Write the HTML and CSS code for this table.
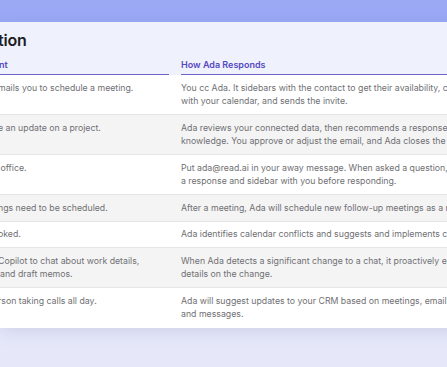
FILE: index.html
```html
<!DOCTYPE html>
<html lang="en">
<head>
<meta charset="utf-8">
<title>Ada in Action</title>
<link rel="stylesheet" href="styles.css">
</head>
<body>
  <div class="band"></div>
  <section class="card">
    <div class="card-head">
      <h2 class="title">tion</h2>
      <div class="grid head-row">
        <div class="th th-left">nt</div>
        <div class="th">How Ada Responds</div>
      </div>
    </div>
    <div class="grid row">
      <div class="td td-left">mails you to schedule a meeting.</div>
      <div class="td">You cc Ada. It sidebars with the contact to get their availability, checks it<br>with your calendar, and sends the invite.</div>
    </div>
    <div class="grid row alt">
      <div class="td td-left">e an update on a project.</div>
      <div class="td">Ada reviews your connected data, then recommends a response based on your<br>knowledge. You approve or adjust the email, and Ada closes the loop.</div>
    </div>
    <div class="grid row">
      <div class="td td-left">&nbsp;office.</div>
      <div class="td">Put ada@read.ai in your away message. When asked a question, Ada drafts<br>a response and sidebar with you before responding.</div>
    </div>
    <div class="grid row alt">
      <div class="td td-left">ngs need to be scheduled.</div>
      <div class="td">After a meeting, Ada will schedule new follow-up meetings as a next step.</div>
    </div>
    <div class="grid row">
      <div class="td td-left">oked.</div>
      <div class="td">Ada identifies calendar conflicts and suggests and implements changes.</div>
    </div>
    <div class="grid row alt">
      <div class="td td-left">Copilot to chat about work details,<br>and draft memos.</div>
      <div class="td">When Ada detects a significant change to a chat, it proactively emails you<br>details on the change.</div>
    </div>
    <div class="grid row last">
      <div class="td td-left">rson taking calls all day.</div>
      <div class="td">Ada will suggest updates to your CRM based on meetings, emails,<br>and messages.</div>
    </div>
  </section>
</body>
</html>
```

FILE: styles.css
```css
html, body {
  margin: 0;
  padding: 0;
}

body {
  width: 447px;
  height: 367px;
  overflow: hidden;
  background: linear-gradient(180deg, #eceefb 0%, #e6e8fa 100%);
  font-family: Inter, "Noto Sans", sans-serif;
}

.band {
  height: 22px;
  background: #9ba9f5;
}

.card {
  width: 660px;
  background: #ffffff;
  box-shadow: 0 5px 16px rgba(70, 70, 120, 0.13);
}

.card-head {
  background: #eff1fd;
  padding-top: 8px;
}

.title {
  margin: 0 0 9px -2px;
  font-size: 16px;
  line-height: 20px;
  font-weight: 600;
  letter-spacing: -0.01em;
  color: #1d1d22;
}

.grid {
  display: grid;
  grid-template-columns: 169px 470px;
  column-gap: 12px;
}

.th {
  font-size: 9px;
  line-height: 12px;
  font-weight: 600;
  color: #5548c2;
  padding-bottom: 3px;
  border-bottom: 1px solid #6c63c6;
}

.th-left {
  margin-left: -1px;
}

.row {
  background: #ffffff;
  border-bottom: 1px solid #e6e6e9;
}

.row.alt {
  background: #f4f4f5;
}

.row.last {
  border-bottom: none;
  padding-bottom: 1px;
}

.td {
  padding: 6.5px 0 5.5px;
  font-size: 8.75px;
  line-height: 13.5px;
  color: #707073;
  white-space: nowrap;
}

.td-left {
  text-indent: -2px;
}
```
